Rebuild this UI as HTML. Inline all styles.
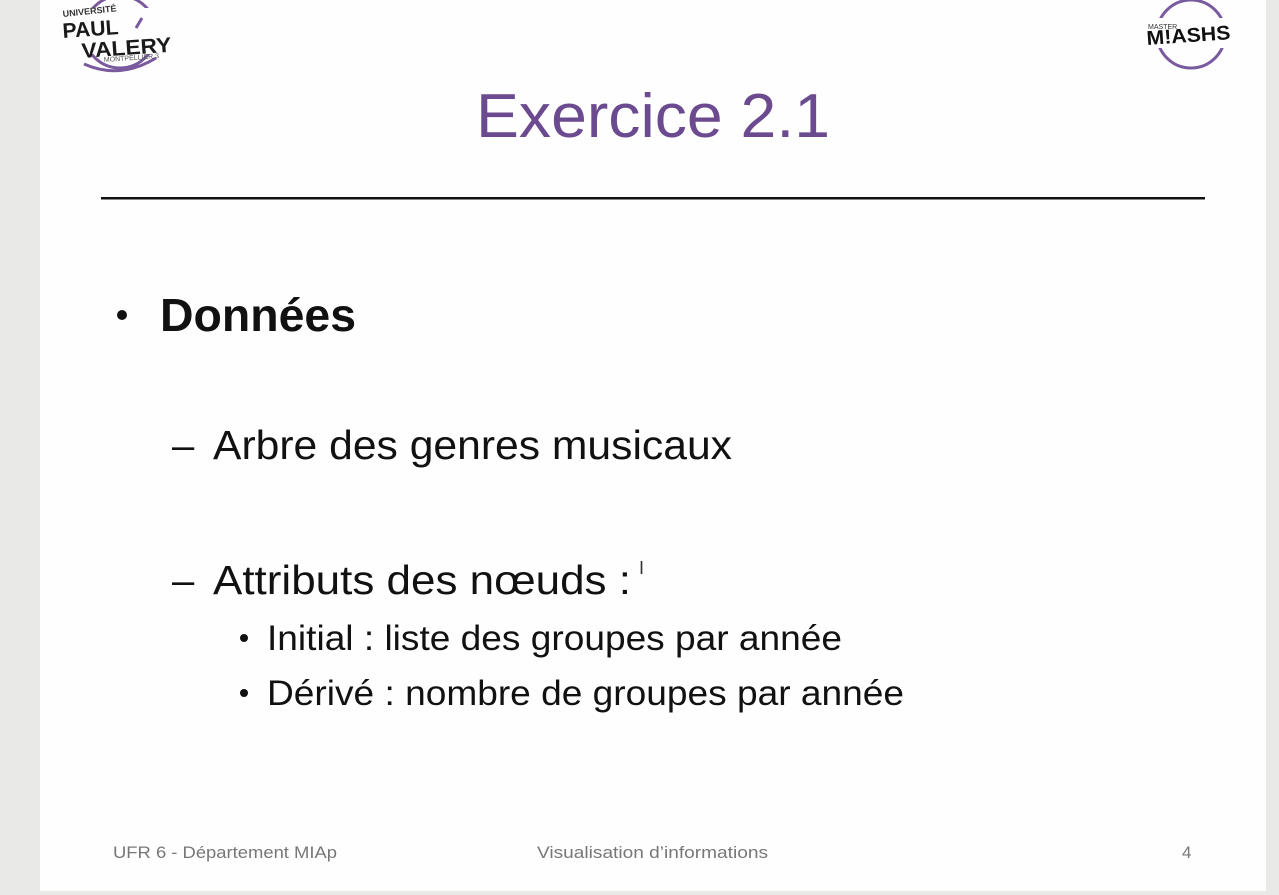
<!DOCTYPE html>
<html><head><meta charset="utf-8"><style>
html,body{margin:0;padding:0;background:#e9eae8;}
svg{display:block}
text{font-family:"Liberation Sans",sans-serif;}
</style></head><body>
<svg width="1279" height="895" viewBox="0 0 1279 895" xmlns="http://www.w3.org/2000/svg">
<rect x="0" y="0" width="1279" height="895" fill="#e9eae8"/>
<rect x="40" y="0" width="1226" height="891" fill="#fefefe"/>
<!-- Paul Valery logo -->
<circle cx="120" cy="32" r="36" fill="none" stroke="#7a5a9e" stroke-width="3"/>
<rect x="60" y="8" width="120" height="46" fill="#fefefe"/>
<path d="M84 64 Q120 80 156 58" fill="none" stroke="#7a5a9e" stroke-width="3"/>
<text x="63" y="17" font-size="9" font-weight="bold" fill="#333" transform="rotate(-6 63 17)">UNIVERSITÉ</text>
<text x="63" y="38" font-size="21" font-weight="bold" fill="#1a1a1a" textLength="56" lengthAdjust="spacingAndGlyphs" transform="rotate(-4 63 38)">PAUL</text>
<text x="82" y="58" font-size="21" font-weight="bold" fill="#1a1a1a" textLength="90" lengthAdjust="spacingAndGlyphs" transform="rotate(-4 82 58)">VALERY</text>
<path d="M136 28 L142 18" stroke="#7a5a9e" stroke-width="3"/>
<text x="104" y="62" font-size="7" fill="#555" transform="rotate(-4 104 62)">MONTPELLIER 3</text>
<!-- MIASHS logo -->
<circle cx="1191" cy="34" r="34" fill="none" stroke="#7a5a9e" stroke-width="3"/>
<rect x="1138" y="18" width="108" height="30" fill="#fefefe"/>
<text x="1148" y="29" font-size="7" fill="#333">MASTER</text>
<text x="1147" y="45" font-size="20" font-weight="bold" fill="#111" textLength="84" lengthAdjust="spacingAndGlyphs" transform="rotate(-4 1147 45)">M!ASHS</text>
<!-- title -->
<text x="476" y="137" font-size="62" fill="#6b4a8f" textLength="354" lengthAdjust="spacingAndGlyphs">Exercice 2.1</text>
<rect x="101" y="197" width="1104" height="2.5" fill="#111"/>
<!-- bullets -->
<circle cx="122" cy="315" r="5" fill="#111"/>
<text x="160" y="331" font-size="46" font-weight="bold" fill="#111" textLength="196" lengthAdjust="spacingAndGlyphs">Données</text>
<text x="172" y="459" font-size="40" fill="#111">–</text>
<text x="213" y="459" font-size="41" fill="#111" textLength="519" lengthAdjust="spacingAndGlyphs">Arbre des genres musicaux</text>
<text x="172" y="594" font-size="40" fill="#111">–</text>
<text x="213" y="594" font-size="41" fill="#111" textLength="418" lengthAdjust="spacingAndGlyphs">Attributs des nœuds :</text>
<text x="639" y="574" font-size="18" fill="#333">I</text>
<circle cx="244" cy="638" r="4" fill="#111"/>
<text x="267" y="650" font-size="35" fill="#111" textLength="575" lengthAdjust="spacingAndGlyphs">Initial : liste des groupes par année</text>
<circle cx="244" cy="693" r="4" fill="#111"/>
<text x="267" y="705" font-size="35" fill="#111" textLength="637" lengthAdjust="spacingAndGlyphs">Dérivé : nombre de groupes par année</text>
<!-- footer -->
<text x="113" y="858" font-size="17" fill="#777" textLength="224" lengthAdjust="spacingAndGlyphs">UFR 6 - Département MIAp</text>
<text x="537" y="858" font-size="17" fill="#777" textLength="231" lengthAdjust="spacingAndGlyphs">Visualisation d’informations</text>
<text x="1182" y="858" font-size="17" fill="#777">4</text>
</svg>
</body></html>
